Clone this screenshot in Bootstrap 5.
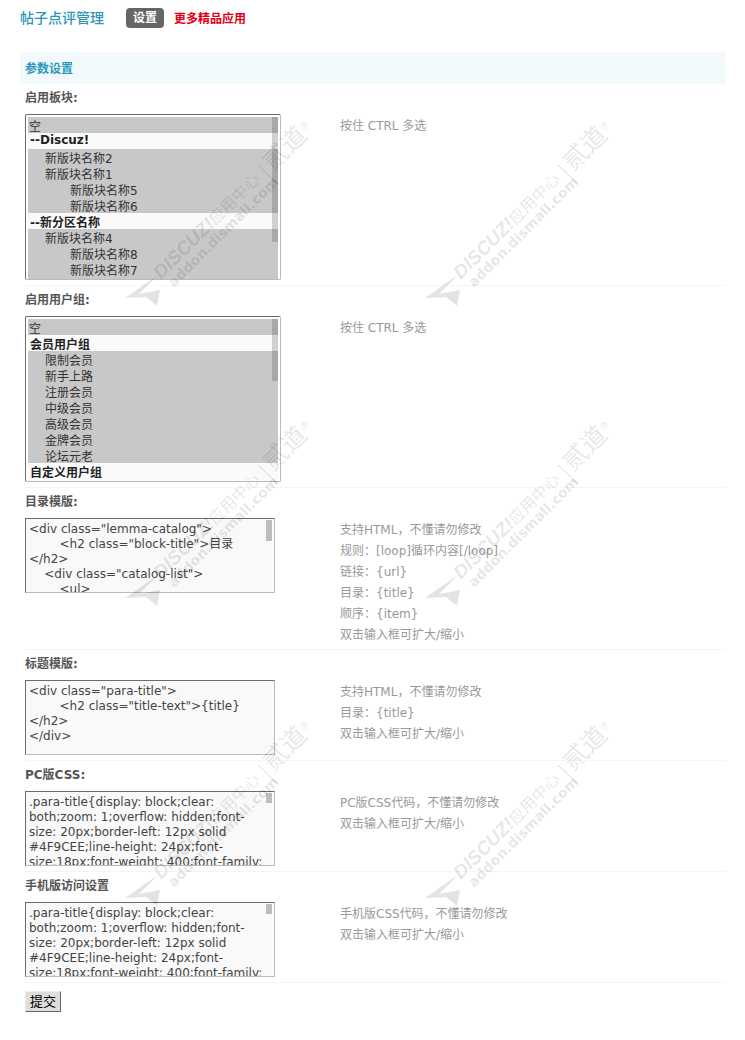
<!DOCTYPE html>
<html lang="zh-CN">
<head>
<meta charset="utf-8">
<title>帖子点评管理</title>
<link href="https://cdn.jsdelivr.net/npm/bootstrap@5.3.0/dist/css/bootstrap.min.css" rel="stylesheet">
<style>
html,body{height:1040px;overflow:hidden}
body{position:relative;background:#fff;font:12px/1.25 "DejaVu Sans","Noto Sans CJK SC",sans-serif;color:#444}
.pg{padding:8px 20px 0}
.top-bar{height:20px;margin-bottom:24px}
.app-title{font-size:14px;font-weight:500;color:#2b97bb;margin:0;width:106px}
.set-tab{width:38px;height:20px;line-height:20px;background:#666;color:#fff;font-weight:700;border-radius:4px;text-align:center;text-decoration:none}
.more-link{color:#e00016;font-weight:700;text-decoration:none;margin-left:10px;padding-top:2px}
.sec-head{height:32px;line-height:34px;background:#f2f9fd;color:#2b97bb;font-weight:700;padding-left:5px}
.cfg-row{margin-left:5px;border-bottom:1px solid #f5f5f5;padding-bottom:5px}
.cfg-label{height:30px;line-height:28px;font-weight:700;color:#555}
.ctl-col{width:315px;flex:none}
.hint-col{color:#999;line-height:21px;padding-top:2px;margin-bottom:-2px}
.hint-col p{margin:0}
.sel-wrap{position:relative;width:256px;height:166px}
.list-sel{display:block;width:256px;height:166px;padding:2px;border:1px solid;border-color:#6c6c6c #bbb #bbb #6c6c6c;background:#fff;font:12px/16px "DejaVu Sans","Noto Sans CJK SC",sans-serif;color:#333;overflow:hidden;scrollbar-width:none;outline:0}
.list-sel option{height:16px;min-height:16px;padding:0 0 0 1px;line-height:14px;color:#333}
.list-sel option:checked{background:#c8c8c8 linear-gradient(#c8c8c8,#c8c8c8);color:#333}
.list-sel .opt-group{background:#fafafa;font-weight:700;color:#222;padding-left:2px}
.list-sel .lv1{padding-left:17px}
.list-sel .lv2{padding-left:42px}
.sel-thumb{position:absolute;left:247px;width:6px;top:3px;background:rgba(0,0,0,.16)}
.thumb-a{height:125px}
.thumb-b{height:62px}
.area-wrap{position:relative;width:250px;height:75px}
.tpl-area{display:block;width:250px;height:75px;padding:3px 3px 1px 3px;border:1px solid;border-color:#6c6c6c #bbb #bbb #6c6c6c;background:#f9f9f9;font:12px/15px "DejaVu Sans","Noto Sans CJK SC",sans-serif;color:#444;resize:none;outline:0;overflow:hidden;border-radius:0}
.area-thumb{position:absolute;left:241px;width:6px;top:2px;background:#bdbdbd}
.thumb-long{height:21px}
.thumb-short{height:10px}
.sub-btn{width:36px;height:21px;padding:0;margin:8px 0 0 5px;border:1px solid;border-color:#eee #666 #666 #eee;border-radius:0;background:#ddd;color:#000;font-size:13px;line-height:19px}
.sub-btn:hover{background:#ddd;color:#000;border-color:#eee #666 #666 #eee}
.wm-layer{position:absolute;left:0;top:0;pointer-events:none}
.wm-a{font:italic 700 19px "Liberation Sans",sans-serif}
.wm-cn{font:400 16px "Noto Sans CJK SC",sans-serif}
.wm-b{font:700 14px "DejaVu Sans",sans-serif}
.wm-c{font:400 25px "Noto Sans CJK SC",sans-serif}
.wm-r{font:400 10px "DejaVu Sans",sans-serif}
</style>
</head>
<body>
<div class="pg">
  <div class="top-bar d-flex align-items-center">
    <h1 class="app-title">帖子点评管理</h1>
    <a class="set-tab" href="#">设置</a>
    <a class="more-link" href="#">更多精品应用</a>
  </div>
  <form>
    <div class="sec-head">参数设置</div>

    <div class="cfg-row">
      <div class="cfg-label">启用板块:</div>
      <div class="d-flex">
        <div class="ctl-col">
          <div class="sel-wrap">
            <select class="list-sel" multiple size="10" aria-label="启用板块">
              <option selected>空</option>
              <option class="opt-group">--Discuz!</option>
              <option class="lv1" selected>新版块名称2</option>
              <option class="lv1" selected>新版块名称1</option>
              <option class="lv2" selected>新版块名称5</option>
              <option class="lv2" selected>新版块名称6</option>
              <option class="opt-group">--新分区名称</option>
              <option class="lv1" selected>新版块名称4</option>
              <option class="lv2" selected>新版块名称8</option>
              <option class="lv2" selected>新版块名称7</option>
              <option class="lv2" selected>&nbsp;</option>
            </select>
            <span class="sel-thumb thumb-a"></span>
          </div>
        </div>
        <div class="hint-col">按住 CTRL 多选</div>
      </div>
    </div>

    <div class="cfg-row">
      <div class="cfg-label">启用用户组:</div>
      <div class="d-flex">
        <div class="ctl-col">
          <div class="sel-wrap">
            <select class="list-sel" multiple size="10" aria-label="启用用户组">
              <option selected>空</option>
              <option class="opt-group">会员用户组</option>
              <option class="lv1" selected>限制会员</option>
              <option class="lv1" selected>新手上路</option>
              <option class="lv1" selected>注册会员</option>
              <option class="lv1" selected>中级会员</option>
              <option class="lv1" selected>高级会员</option>
              <option class="lv1" selected>金牌会员</option>
              <option class="lv1" selected>论坛元老</option>
              <option class="opt-group">自定义用户组</option>
              <option class="opt-group">&nbsp;</option>
            </select>
            <span class="sel-thumb thumb-b"></span>
          </div>
        </div>
        <div class="hint-col">按住 CTRL 多选</div>
      </div>
    </div>

    <div class="cfg-row">
      <div class="cfg-label">目录模版:</div>
      <div class="d-flex">
        <div class="ctl-col">
          <div class="area-wrap">
          <textarea class="tpl-area" aria-label="目录模版"><div class="lemma-catalog">
        <h2 class="block-title">目录</h2>
    <div class="catalog-list">
        <ul>
            [loop]
            <li>
                <span class="index">{item}</span>
                <a href="{url}">{title}</a>
            </li>
            [/loop]
        </ul>
    </div>
</div></textarea>
          <span class="area-thumb thumb-long"></span>
          </div>
        </div>
        <div class="hint-col">
          <p>支持HTML，不懂请勿修改</p>
          <p>规则：[loop]循环内容[/loop]</p>
          <p>链接：{url}</p>
          <p>目录：{title}</p>
          <p>顺序：{item}</p>
          <p>双击输入框可扩大/缩小</p>
        </div>
      </div>
    </div>

    <div class="cfg-row">
      <div class="cfg-label">标题模版:</div>
      <div class="d-flex">
        <div class="ctl-col">
          <div class="area-wrap">
          <textarea class="tpl-area" aria-label="标题模版"><div class="para-title">
        <h2 class="title-text">{title}</h2>
</div></textarea>
          </div>
        </div>
        <div class="hint-col">
          <p>支持HTML，不懂请勿修改</p>
          <p>目录：{title}</p>
          <p>双击输入框可扩大/缩小</p>
        </div>
      </div>
    </div>

    <div class="cfg-row">
      <div class="cfg-label">PC版CSS:</div>
      <div class="d-flex">
        <div class="ctl-col">
          <div class="area-wrap">
          <textarea class="tpl-area" aria-label="PC版CSS">.para-title{display: block;clear: both;zoom: 1;overflow: hidden;font-size: 20px;border-left: 12px solid #4F9CEE;line-height: 24px;font-size:18px;font-weight: 400;font-family: "Microsoft YaHei";color: #333;margin: 35px 0 15px;padding-left: 10px;}</textarea>
          <span class="area-thumb thumb-short"></span>
          </div>
        </div>
        <div class="hint-col">
          <p>PC版CSS代码，不懂请勿修改</p>
          <p>双击输入框可扩大/缩小</p>
        </div>
      </div>
    </div>

    <div class="cfg-row">
      <div class="cfg-label">手机版访问设置</div>
      <div class="d-flex">
        <div class="ctl-col">
          <div class="area-wrap">
          <textarea class="tpl-area" aria-label="手机版访问设置">.para-title{display: block;clear: both;zoom: 1;overflow: hidden;font-size: 20px;border-left: 12px solid #4F9CEE;line-height: 24px;font-size:18px;font-weight: 400;font-family: "Microsoft YaHei";color: #333;margin: 35px 0 15px;padding-left: 10px;}</textarea>
          <span class="area-thumb thumb-short"></span>
          </div>
        </div>
        <div class="hint-col">
          <p>手机版CSS代码，不懂请勿修改</p>
          <p>双击输入框可扩大/缩小</p>
        </div>
      </div>
    </div>

    <button type="button" class="btn sub-btn">提交</button>
  </form>
</div>

<svg class="wm-layer" width="745" height="1040" viewBox="0 0 745 1040" aria-hidden="true">
  <defs>
    <g id="wmark" fill="#000" fill-opacity=".11">
      <polygon points="0,173 33,150 14,169 35,165 32,181 21,172"/>
      <text class="wm-a" transform="translate(36,155) rotate(-45)">DISCUZ!<tspan class="wm-cn">应用中心</tspan></text>
      <text class="wm-b" transform="translate(49,163) rotate(-45)">addon.dismall.com</text>
      <path d="M133 40 L152 58" stroke="#000" stroke-opacity=".15" stroke-width="1" fill="none"/>
      <text class="wm-c" transform="translate(148,47) rotate(-45)">贰道</text>
      <text class="wm-r" transform="translate(174,5)">®</text>
    </g>
  </defs>
  <use href="#wmark" x="125" y="125"/>
  <use href="#wmark" x="425" y="125"/>
  <use href="#wmark" x="125" y="425"/>
  <use href="#wmark" x="425" y="425"/>
  <use href="#wmark" x="125" y="725"/>
  <use href="#wmark" x="425" y="725"/>
</svg>
<script src="https://cdn.jsdelivr.net/npm/bootstrap@5.3.0/dist/js/bootstrap.bundle.min.js"></script>
</body>
</html>
